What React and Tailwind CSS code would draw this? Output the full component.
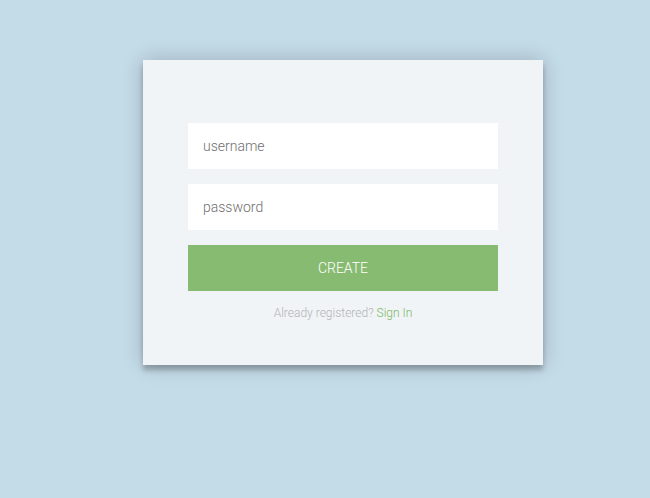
import React from 'react';

export default function App() {
  return (
    <div className="min-h-[498px] w-full bg-[#c4dbe8] font-['Roboto',sans-serif] font-light">
      <div className="pt-[60px] pl-[143px]">
        {/* Register card */}
        <form className="w-[400px] bg-[#f0f4f7] px-[45px] pt-[63px] pb-[45px] text-center shadow-[0_0_20px_0_rgba(0,0,0,0.2),0_5px_5px_0_rgba(0,0,0,0.24)]">
          <input
            type="text"
            placeholder="username"
            className="mb-[15px] block h-[46px] w-full bg-white px-[15px] text-[14px] text-[#555] placeholder:text-[#6f6f6f] outline-none"
          />
          <input
            type="password"
            placeholder="password"
            className="mb-[15px] block h-[46px] w-full bg-white px-[15px] text-[14px] text-[#555] placeholder:text-[#6f6f6f] outline-none"
          />
          <button
            type="button"
            className="block h-[46px] w-full bg-[#88bb72] text-[14px] uppercase text-white"
          >
            create
          </button>
          <p className="mt-[15px] text-[12px] leading-[14px] text-[#b3b3b3]">
            Already registered? <a className="text-[#7cb866]">Sign In</a>
          </p>
        </form>
      </div>
    </div>
  );
}
